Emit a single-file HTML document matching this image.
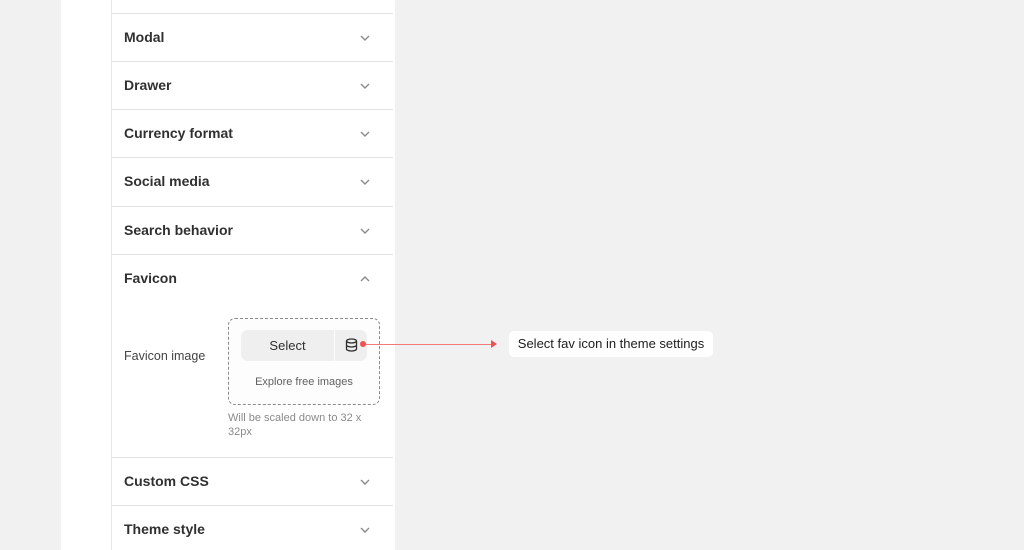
<!DOCTYPE html>
<html style="width:1024px;height:550px;overflow:hidden"><head><style>
body{margin:0;width:1024px;height:550px;background:#f1f1f1;font-family:"Liberation Sans",sans-serif;position:relative;overflow:hidden;color:#303030}
.panel{position:absolute;left:61px;top:0;width:334px;height:550px;background:#fff}
.list{position:absolute;left:111px;top:0;width:281px;height:550px;border-left:1px solid #e6e6e6}
.row{position:absolute;left:0;width:281px;height:48px;border-top:1px solid #e3e3e3}
.row span{position:absolute;left:12px;top:15px;font-size:14px;font-weight:bold;color:#303030}
.row svg{position:absolute;left:247px;top:19px}
.abs{position:absolute}
</style></head><body>
<div class="panel"></div>
<div class="list">
<div class="row" style="top:13px"><span>Modal</span><svg width="12" height="10"><path d="M2 3l4 4 4-4" stroke="#8a8a8a" stroke-width="1.4" fill="none"/></svg></div>
<div class="row" style="top:61px"><span>Drawer</span><svg width="12" height="10"><path d="M2 3l4 4 4-4" stroke="#8a8a8a" stroke-width="1.4" fill="none"/></svg></div>
<div class="row" style="top:109px"><span>Currency format</span><svg width="12" height="10"><path d="M2 3l4 4 4-4" stroke="#8a8a8a" stroke-width="1.4" fill="none"/></svg></div>
<div class="row" style="top:157px"><span>Social media</span><svg width="12" height="10"><path d="M2 3l4 4 4-4" stroke="#8a8a8a" stroke-width="1.4" fill="none"/></svg></div>
<div class="row" style="top:206px"><span>Search behavior</span><svg width="12" height="10"><path d="M2 3l4 4 4-4" stroke="#8a8a8a" stroke-width="1.4" fill="none"/></svg></div>
<div class="row" style="top:254px;height:203px"><span>Favicon</span><svg width="12" height="10"><path d="M2 7l4-4 4 4" stroke="#8a8a8a" stroke-width="1.4" fill="none"/></svg></div>
<div class="row" style="top:457px"><span>Custom CSS</span><svg width="12" height="10"><path d="M2 3l4 4 4-4" stroke="#8a8a8a" stroke-width="1.4" fill="none"/></svg></div>
<div class="row" style="top:505px"><span>Theme style</span><svg width="12" height="10"><path d="M2 3l4 4 4-4" stroke="#8a8a8a" stroke-width="1.4" fill="none"/></svg></div>
</div>
<div class="abs" style="left:124px;top:349px;font-size:12.5px;color:#444">Favicon image</div>
<div class="abs" style="left:228px;top:318px;width:150px;height:85px;border:1px dashed #8a8a8a;border-radius:7px;background:#fdfdfd"></div>
<div class="abs" style="left:241px;top:330px;width:126px;height:31px;background:#efefef;border-radius:7px"></div>
<div class="abs" style="left:334px;top:330px;width:1px;height:31px;background:#fff"></div>
<div class="abs" style="left:241px;top:338px;width:93px;text-align:center;font-size:13px;color:#303030">Select</div>
<svg class="abs" style="left:345px;top:338px" width="13" height="14" viewBox="0 0 13 14"><ellipse cx="6.5" cy="3" rx="5" ry="2" stroke="#303030" stroke-width="1.3" fill="none"/><path d="M1.5 3v8c0 1.1 2.2 2 5 2s5-.9 5-2V3M1.5 7c0 1.1 2.2 2 5 2s5-.9 5-2" stroke="#303030" stroke-width="1.3" fill="none"/></svg>
<div class="abs" style="left:229px;top:376px;width:150px;text-align:center;font-size:11px;color:#616161">Explore free images</div>
<div class="abs" style="left:228px;top:411px;width:150px;font-size:11px;line-height:14px;color:#8a8a8a">Will be scaled down to 32 x 32px</div>
<div class="abs" style="left:363px;top:343.5px;width:130px;height:1.5px;background:#f47a7a"></div>
<div class="abs" style="left:360px;top:341px;width:6px;height:6px;border-radius:50%;background:#f05050"></div>
<svg class="abs" style="left:491px;top:340px" width="6" height="8"><path d="M0 0L6 4L0 8Z" fill="#f05050"/></svg>
<div class="abs" style="left:509px;top:331px;width:204px;height:26px;background:#fff;border-radius:5px;font-size:13px;line-height:26px;text-align:center;color:#202020">Select fav icon in theme settings</div>
</body></html>
